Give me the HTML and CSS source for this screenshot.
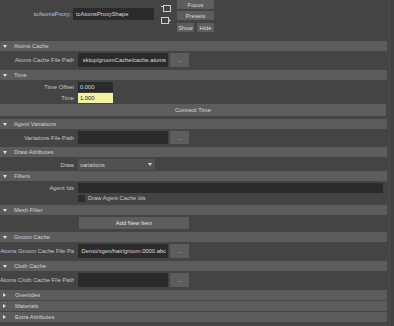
FILE: index.html
```html
<!DOCTYPE html>
<html lang="en">
<head>
    <meta charset="UTF-8">
    <title>tcAtomsProxy Attribute Editor</title>
    <link rel="stylesheet" href="styles.css">
</head>
<body>
<div class="window">
    <div class="editor">

        <!-- node name + focus/presets -->
        <div class="node-row">
            <span class="node-label">tcAtomsProxy:</span>
            <span class="field node-name">tcAtomsProxyShape</span>
            <div class="conn-icons">
                <svg width="10" height="7" viewBox="0 0 10 7">
                    <rect x="2.5" y="0.5" width="7" height="6" fill="none" stroke="#cfcfcf" stroke-width="1"/>
                    <line x1="0" y1="1.5" x2="2.5" y2="1.5" stroke="#cfcfcf" stroke-width="1"/>
                </svg>
                <svg width="10" height="7" viewBox="0 0 10 7">
                    <rect x="0.5" y="0.5" width="7" height="6" fill="none" stroke="#cfcfcf" stroke-width="1"/>
                    <path d="M7,1.5 L10,3.5 L7,5.5 Z" fill="#cfcfcf"/>
                </svg>
            </div>
            <div class="node-buttons">
                <button class="btn">Focus</button>
                <button class="btn">Presets</button>
                <div class="btn-pair">
                    <button class="btn show">Show</button>
                    <button class="btn hide">Hide</button>
                </div>
            </div>
        </div>

        <div class="frame">
            <div class="frame-header"><span class="caret"></span>Atoms Cache</div>
            <div class="frame-body">
                <div class="attr-row path-row">
                    <span class="attr-label">Atoms Cache File Path</span>
                    <span class="field path"><span>sktop/groomCache/cache.atoms</span></span>
                    <button class="btn browse">...</button>
                </div>
            </div>
        </div>

        <div class="frame">
            <div class="frame-header"><span class="caret"></span>Time</div>
            <div class="frame-body">
                <div class="attr-row num-row">
                    <span class="attr-label">Time Offset</span>
                    <span class="field num">0.000</span>
                </div>
                <div class="attr-row num-row">
                    <span class="attr-label">Time</span>
                    <span class="field num keyed">1.000</span>
                </div>
                <button class="btn wide">Connect Time</button>
            </div>
        </div>

        <div class="frame">
            <div class="frame-header"><span class="caret"></span>Agent Variations</div>
            <div class="frame-body">
                <div class="attr-row path-row short">
                    <span class="attr-label">Variations File Path</span>
                    <span class="field path"></span>
                    <button class="btn browse">...</button>
                </div>
            </div>
        </div>

        <div class="frame">
            <div class="frame-header"><span class="caret"></span>Draw Attributes</div>
            <div class="frame-body tight">
                <div class="attr-row drop-row">
                    <span class="attr-label">Draw</span>
                    <span class="dropdown">variations<span class="drop-arrow"></span></span>
                </div>
            </div>
        </div>

        <div class="frame">
            <div class="frame-header"><span class="caret"></span>Filters</div>
            <div class="frame-body">
                <div class="attr-row num-row">
                    <span class="attr-label">Agent Ids</span>
                    <span class="field ids"></span>
                </div>
                <div class="check-row">
                    <span class="checkbox"></span>Draw Agent Cache Ids
                </div>
            </div>
        </div>

        <div class="frame">
            <div class="frame-header"><span class="caret"></span>Mesh Filter</div>
            <div class="frame-body">
                <button class="btn add-item">Add New Item</button>
            </div>
        </div>

        <div class="frame">
            <div class="frame-header"><span class="caret"></span>Groom Cache</div>
            <div class="frame-body">
                <div class="attr-row path-row">
                    <span class="attr-label">Atoms Groom Cache File Pa</span>
                    <span class="field path"><span>Demo/xgen/hair/groom.0000.abc</span></span>
                    <button class="btn browse">...</button>
                </div>
            </div>
        </div>

        <div class="frame">
            <div class="frame-header"><span class="caret"></span>Cloth Cache</div>
            <div class="frame-body">
                <div class="attr-row path-row">
                    <span class="attr-label">Atoms Cloth Cache File Path</span>
                    <span class="field path"></span>
                    <button class="btn browse">...</button>
                </div>
            </div>
        </div>

        <div class="frame closed">
            <div class="frame-header"><span class="caret"></span>Overrides</div>
        </div>
        <div class="frame closed">
            <div class="frame-header"><span class="caret"></span>Materials</div>
        </div>
        <div class="frame closed">
            <div class="frame-header"><span class="caret"></span>Extra Attributes</div>
        </div>

    </div>
    <div class="scroll-track"></div>
</div>
</body>
</html>
```

FILE: styles.css
```css
body {
    margin: 0;
    background-color: #444444;
    font-family: "Liberation Sans", Arial, sans-serif;
    font-size: 5.8px;
    color: #c6c6c6;
    overflow: hidden;
}

.window {
    display: flex;
    width: 394px;
    height: 326px;
}

.editor {
    width: 387px;
}

.scroll-track {
    flex: 1;
    margin-left: 2px;
    border-left: 1px solid #4b4b4b;
    background-color: #424242;
}

button {
    font-family: inherit;
    font-size: inherit;
    border: none;
    padding: 0;
    margin: 0;
}

.btn {
    display: flex;
    align-items: center;
    justify-content: center;
    background-color: #5d5d5d;
    color: #dcdcdc;
}

.field {
    display: flex;
    align-items: center;
    background-color: #2b2b2b;
    color: #dedede;
    padding-left: 2px;
    box-sizing: border-box;
    white-space: nowrap;
    overflow: hidden;
}

/* top node row */
.node-row {
    display: flex;
    height: 41px;
}

.node-label {
    width: 71px;
    text-align: right;
    margin-top: 11px;
}

.node-name {
    width: 81px;
    height: 12px;
    margin: 8px 0 0 2px;
    padding-left: 3px;
}

.conn-icons {
    display: flex;
    flex-direction: column;
    gap: 5px;
    margin: 5px 0 0 7px;
}

.node-buttons {
    display: flex;
    flex-direction: column;
    margin-left: 6px;
    width: 37px;
}

.node-buttons .btn {
    height: 9px;
    margin-bottom: 2px;
}

.btn-pair {
    display: flex;
    justify-content: space-between;
    margin-top: 1px;
}

.btn-pair .show { width: 17px; }
.btn-pair .hide { width: 17px; }

/* frame layouts */
.frame-header {
    display: flex;
    align-items: center;
    height: 10px;
    padding-left: 3px;
    background-color: #5c5c5c;
    color: #d2d2d2;
}

.caret {
    width: 0;
    height: 0;
    border-left: 2.5px solid transparent;
    border-right: 2.5px solid transparent;
    border-top: 3px solid #e0e0e0;
    margin-right: 7px;
}

.closed .frame-header {
    margin-bottom: 1px;
}

.closed .caret {
    border-top: 2.5px solid transparent;
    border-bottom: 2.5px solid transparent;
    border-left: 3px solid #e0e0e0;
    border-right: none;
    margin-right: 9px;
}

.frame-body {
    padding: 2px 0 3px;
}

.frame-body.tight {
    padding-bottom: 1px;
}

.attr-row {
    display: flex;
    align-items: center;
}

.attr-label {
    width: 74px;
    margin-right: 4px;
    text-align: right;
    white-space: nowrap;
    overflow: hidden;
    flex-shrink: 0;
}

.path-row {
    height: 14px;
}

.path-row.short {
    height: 13px;
}

.path {
    width: 90px;
    height: 100%;
    justify-content: flex-end;
    padding: 0 2px 0 1px;
}

.browse {
    width: 19px;
    height: 100%;
    margin-left: 2px;
}

.num-row {
    height: 10px;
    margin-bottom: 1px;
}

.num {
    width: 35px;
    height: 100%;
}

.keyed {
    background-color: #f2f2a2;
    color: #222222;
}

.wide {
    width: 386px;
    height: 12px;
    margin-top: 1px;
}

.drop-row {
    height: 11px;
}

.dropdown {
    display: flex;
    align-items: center;
    justify-content: space-between;
    width: 77px;
    height: 100%;
    padding: 0 3px 0 2px;
    box-sizing: border-box;
    background-color: #525252;
    color: #d4d4d4;
}

.drop-arrow {
    width: 0;
    height: 0;
    border-left: 2.5px solid transparent;
    border-right: 2.5px solid transparent;
    border-top: 3px solid #d8d8d8;
}

.ids {
    width: 305px;
    height: 100%;
}

.check-row {
    display: flex;
    align-items: center;
    height: 8px;
    margin-top: 1px;
    padding-left: 78px;
}

.checkbox {
    width: 7px;
    height: 7px;
    background-color: #2b2b2b;
    margin-right: 3px;
}

.add-item {
    width: 110px;
    height: 12px;
    margin-left: 79px;
    color: #e6e6e6;
}
```
